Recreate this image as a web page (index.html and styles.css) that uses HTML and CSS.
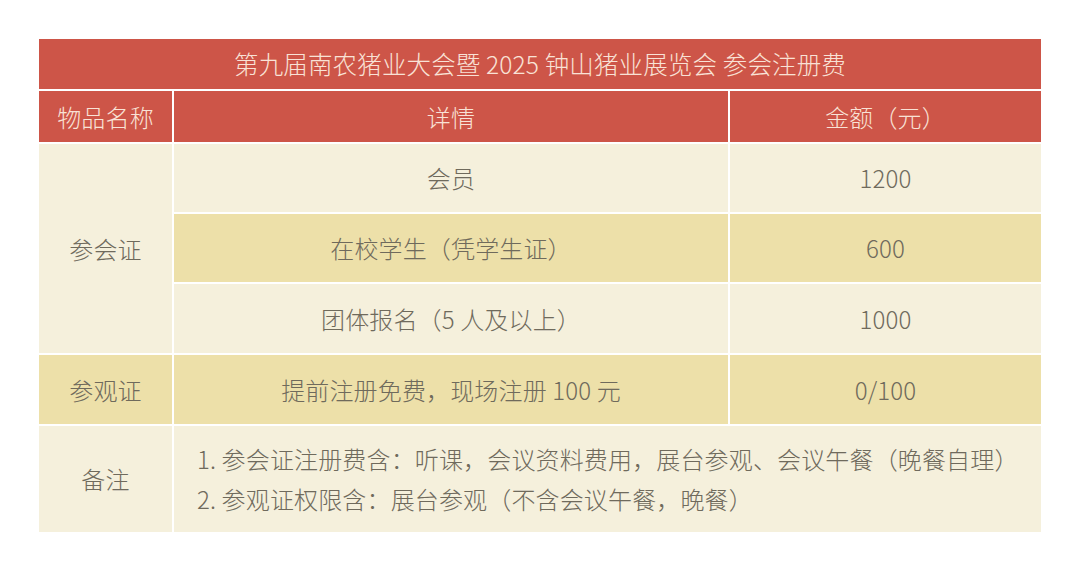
FILE: index.html
```html
<!DOCTYPE html>
<html lang="zh-CN">
<head>
<meta charset="utf-8">
<link rel="stylesheet" href="styles.css">
</head>
<body>
<div class="fee-table">
  <div class="cell title">第九届南农猪业大会暨 2025 钟山猪业展览会 参会注册费</div>
  <div class="cell head">物品名称</div>
  <div class="cell head">详情</div>
  <div class="cell head">金额（元）</div>

  <div class="cell light item span3">参会证</div>
  <div class="cell light">会员</div>
  <div class="cell light">1200</div>
  <div class="cell tan">在校学生（凭学生证）</div>
  <div class="cell tan">600</div>
  <div class="cell light">团体报名（5 人及以上）</div>
  <div class="cell light">1000</div>

  <div class="cell tan">参观证</div>
  <div class="cell tan">提前注册免费，现场注册 100 元</div>
  <div class="cell tan">0/100</div>

  <div class="cell light">备注</div>
  <div class="cell light note">
    <div>1. 参会证注册费含：听课，会议资料费用，展台参观、会议午餐（晚餐自理）</div>
    <div>2. 参观证权限含：展台参观（不含会议午餐，晚餐）</div>
  </div>
</div>
</body>
</html>
```
FILE: styles.css
```css
html, body {
  margin: 0;
  padding: 0;
  background: #ffffff;
}
body {
  padding: 39px;
  font-family: "Noto Sans CJK SC", "Noto Sans", sans-serif;
  font-weight: 300;
}
.fee-table {
  width: 1002px;
  display: grid;
  grid-template-columns: 133px 554px 311px;
  grid-template-rows: 50px 51px 68px 68px 69px 69px 106px;
  gap: 2px;
  background: #ffffff;
}
.cell {
  display: flex;
  align-items: center;
  justify-content: center;
  font-size: 24px;
  color: #6f6a5c;
  line-height: 1.4;
  letter-spacing: 0.15px;
}
.title {
  grid-column: 1 / 4;
  background: #cd5548;
  color: #f9e2d6;
  font-size: 24.5px;
}
.head {
  background: #cd5548;
  color: #f9e2d6;
}
.light {
  background: #f5f0dc;
}
.tan {
  background: #ede0a9;
}
.span3 {
  grid-row: 3 / 6;
}
.note {
  grid-column: 2 / 4;
  flex-direction: column;
  align-items: flex-start;
  justify-content: center;
  padding-left: 23px;
  line-height: 40px;
}
```
